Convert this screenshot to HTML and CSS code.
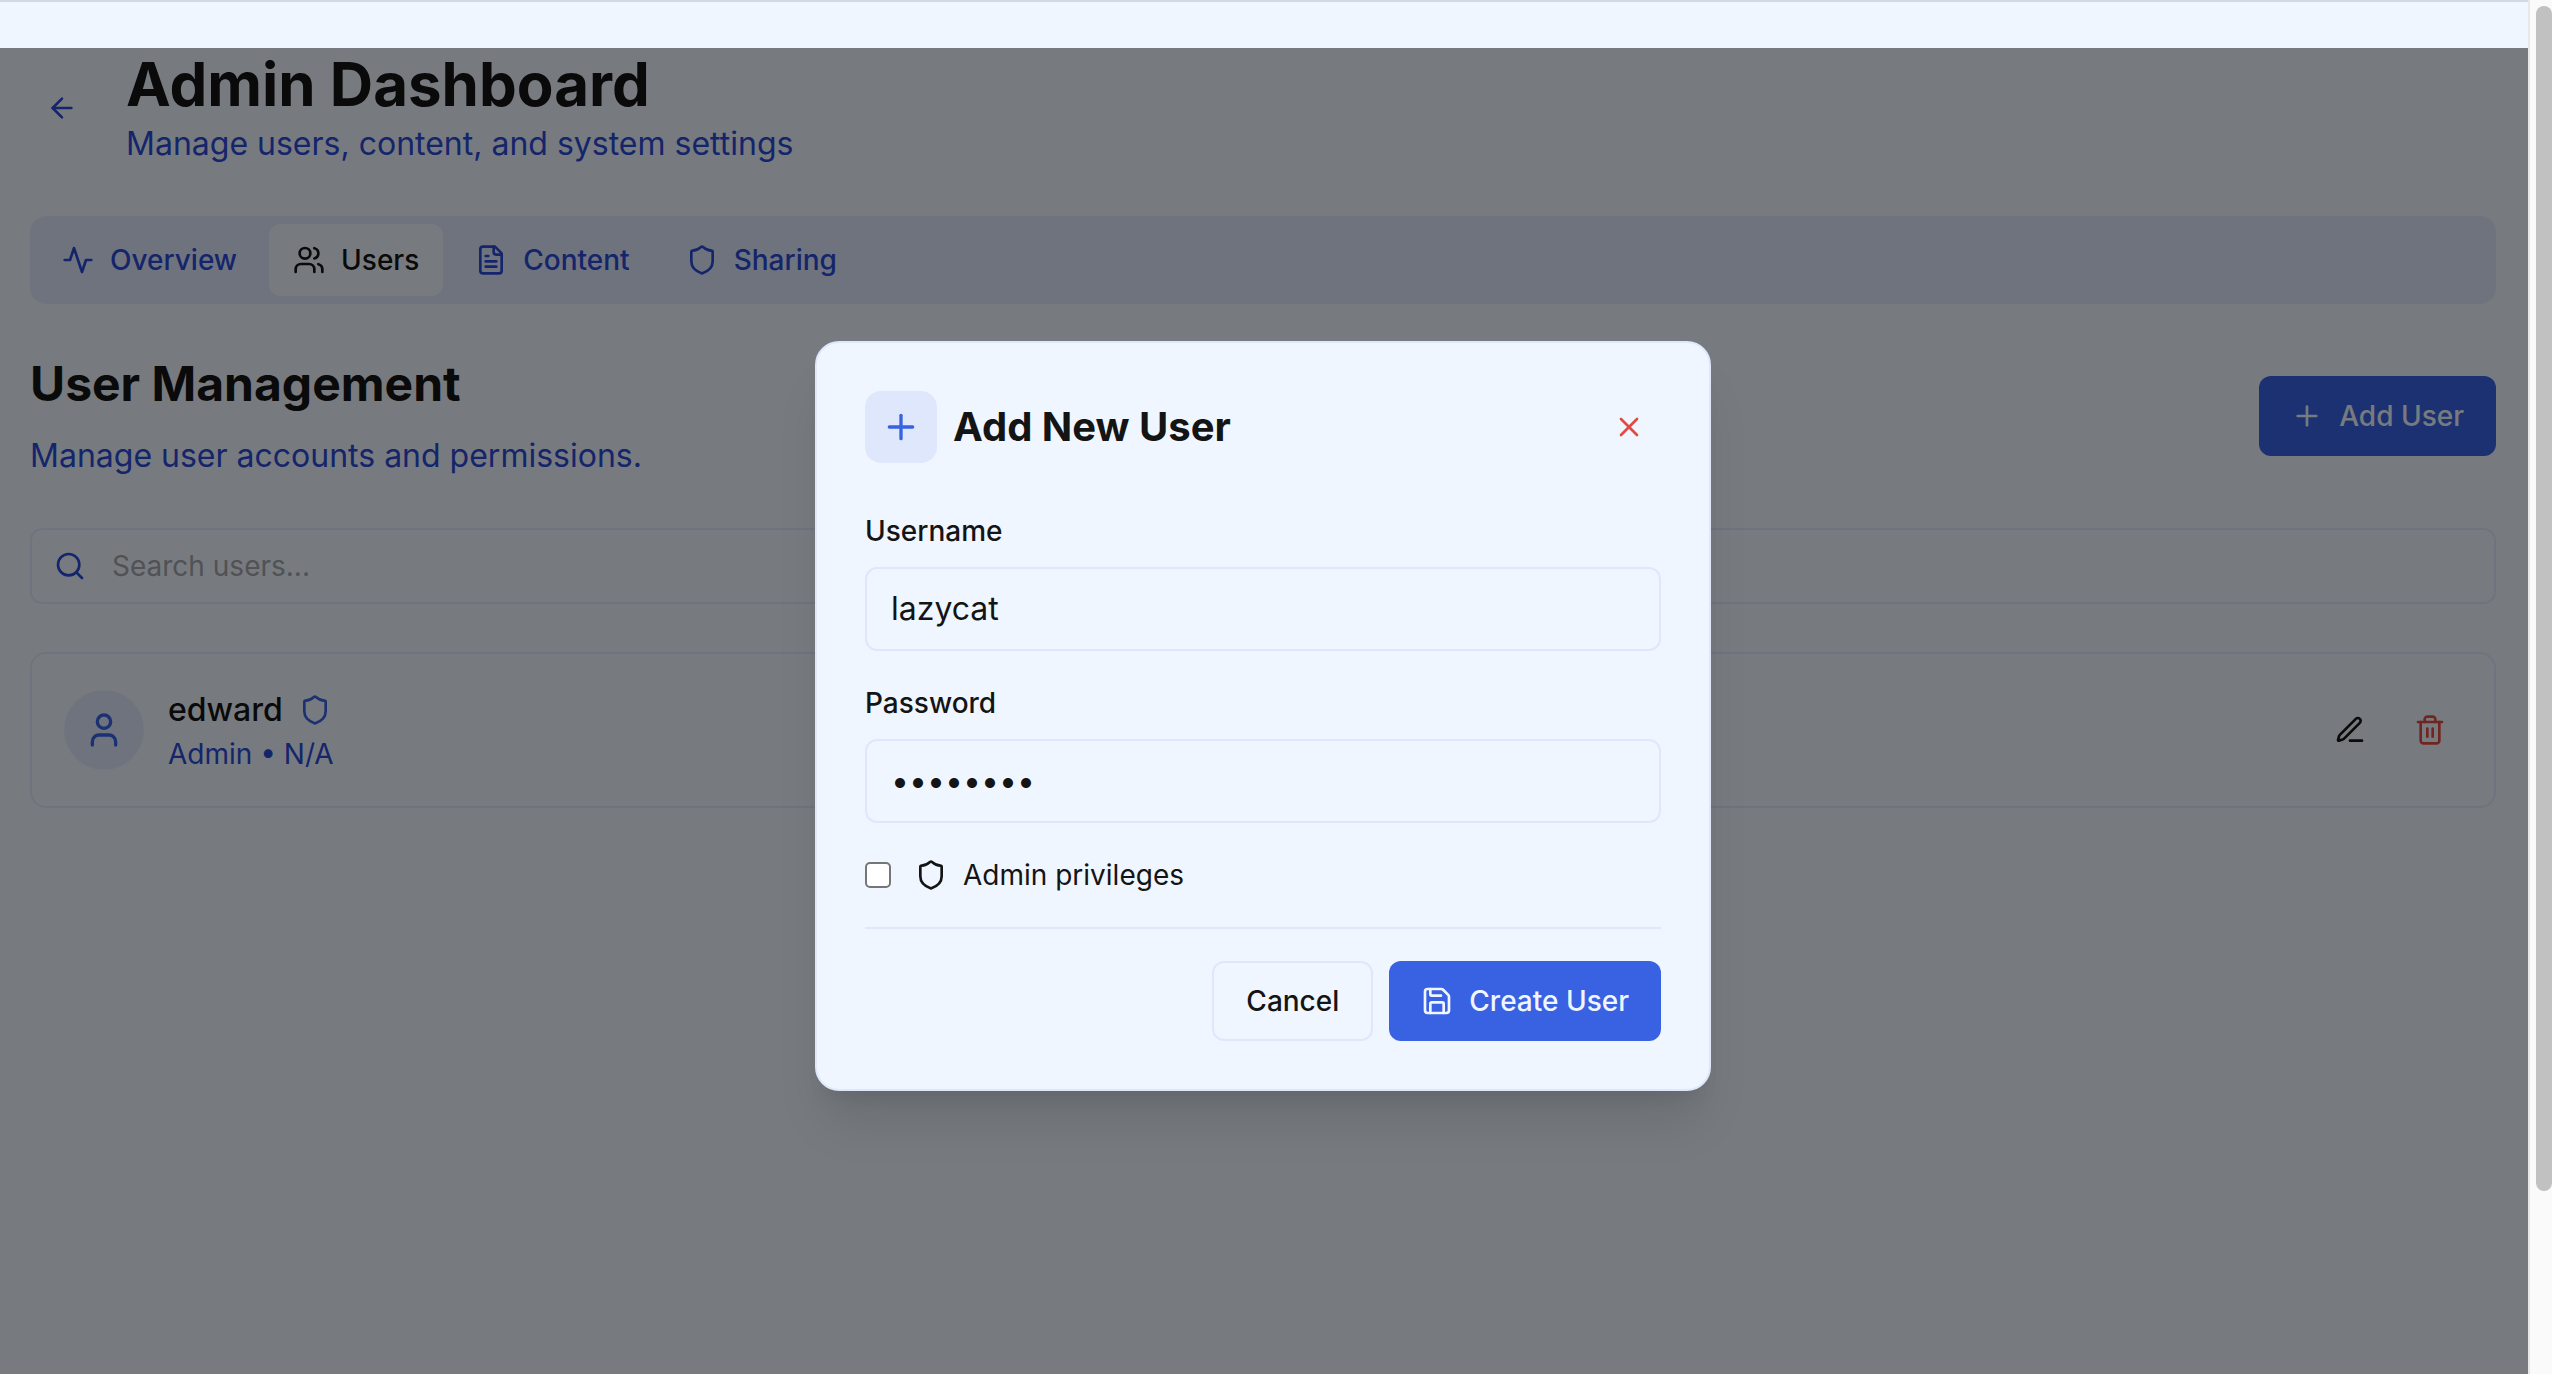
FILE: index.html
```html
<!DOCTYPE html>
<html lang="en">
<head>
<meta charset="utf-8">
<title>Admin Dashboard</title>
<link rel="stylesheet" href="styles.css">
</head>
<body>
<svg class="sprite" aria-hidden="true">
  <symbol id="arrow-left" viewBox="0 0 24 24"><path d="m12 19-7-7 7-7"/><path d="M19 12H5"/></symbol>
  <symbol id="activity" viewBox="0 0 24 24"><path d="M22 12h-4l-3 9L9 3l-3 9H2"/></symbol>
  <symbol id="users" viewBox="0 0 24 24"><path d="M16 21v-2a4 4 0 0 0-4-4H6a4 4 0 0 0-4 4v2"/><circle cx="9" cy="7" r="4"/><path d="M22 21v-2a4 4 0 0 0-3-3.87"/><path d="M16 3.130a4 4 0 0 1 0 7.750"/></symbol>
  <symbol id="file-text" viewBox="0 0 24 24"><path d="M15 2H6a2 2 0 0 0-2 2v16a2 2 0 0 0 2 2h12a2 2 0 0 0 2-2V7Z"/><path d="M14 2v4a2 2 0 0 0 2 2h4"/><path d="M10 9H8"/><path d="M16 13H8"/><path d="M16 17H8"/></symbol>
  <symbol id="shield" viewBox="0 0 24 24"><path d="M20 13c0 5-3.5 7.5-7.66 8.95a1 1 0 0 1-.67-.01C7.5 20.500 4 18 4 13V6a1 1 0 0 1 1-1c2 0 4.500-1.200 6.240-2.720a1.170 1.170 0 0 1 1.520 0C14.510 3.810 17 5 19 5a1 1 0 0 1 1 1z"/></symbol>
  <symbol id="plus" viewBox="0 0 24 24"><path d="M5 12h14"/><path d="M12 5v14"/></symbol>
  <symbol id="search" viewBox="0 0 24 24"><circle cx="11" cy="11" r="8"/><path d="m21 21-4.300-4.300"/></symbol>
  <symbol id="user" viewBox="0 0 24 24"><path d="M19 21v-2a4 4 0 0 0-4-4H9a4 4 0 0 0-4 4v2"/><circle cx="12" cy="7" r="4"/></symbol>
  <symbol id="pen-line" viewBox="0 0 24 24"><path d="M12 20h9"/><path d="M16.376 3.622a1 1 0 0 1 3.002 3.002L7.368 18.635a2 2 0 0 1-.855.506l-2.872.838a.5.5 0 0 1-.62-.62l.838-2.872a2 2 0 0 1 .506-.854z"/></symbol>
  <symbol id="trash" viewBox="0 0 24 24"><path d="M3 6h18"/><path d="M19 6v14c0 1-1 2-2 2H7c-1 0-2-1-2-2V6"/><path d="M8 6V4c0-1 1-2 2-2h4c1 0 2 1 2 2v2"/><path d="M10 11v6"/><path d="M14 11v6"/></symbol>
  <symbol id="close" viewBox="0 0 24 24"><path d="M18 6 6 18"/><path d="m6 6 12 12"/></symbol>
  <symbol id="save" viewBox="0 0 24 24"><path d="M15.200 3a2 2 0 0 1 1.400.6l3.800 3.800a2 2 0 0 1 .6 1.400V19a2 2 0 0 1-2 2H5a2 2 0 0 1-2-2V5a2 2 0 0 1 2-2z"/><path d="M17 21v-7a1 1 0 0 0-1-1H8a1 1 0 0 0-1 1v7"/><path d="M7 3v4a1 1 0 0 0 1 1h7"/></symbol>
</svg>

<div class="app">
  <div class="viewport">
    <div class="topbar"></div>
    <div class="stage">
      <main class="page">
        <header class="page-header">
          <button class="icon-button muted" type="button" aria-label="Back"><svg class="icon"><use href="#arrow-left"/></svg></button>
          <div>
            <h1 class="page-title">Admin Dashboard</h1>
            <p class="lead">Manage users, content, and system settings</p>
          </div>
        </header>

        <nav class="tabs">
          <button class="tab" type="button"><svg class="icon"><use href="#activity"/></svg>Overview</button>
          <button class="tab active" type="button"><svg class="icon"><use href="#users"/></svg>Users</button>
          <button class="tab" type="button"><svg class="icon"><use href="#file-text"/></svg>Content</button>
          <button class="tab" type="button"><svg class="icon"><use href="#shield"/></svg>Sharing</button>
        </nav>

        <section class="section">
          <div class="section-header">
            <div class="section-text">
              <h2 class="section-title">User Management</h2>
              <p class="lead">Manage user accounts and permissions.</p>
            </div>
            <button class="button primary" type="button"><svg class="icon"><use href="#plus"/></svg>Add User</button>
          </div>

          <label class="search">
            <svg class="icon"><use href="#search"/></svg>
            <input class="search-input" type="text" placeholder="Search users..." aria-label="Search users">
          </label>

          <article class="user-card">
            <div class="avatar"><svg class="icon large"><use href="#user"/></svg></div>
            <div class="user-info">
              <div class="user-name">edward<svg class="icon accent"><use href="#shield"/></svg></div>
              <div class="user-meta">Admin • N/A</div>
            </div>
            <div class="user-actions">
              <button class="icon-button" type="button" aria-label="Edit user"><svg class="icon"><use href="#pen-line"/></svg></button>
              <button class="icon-button danger" type="button" aria-label="Delete user"><svg class="icon"><use href="#trash"/></svg></button>
            </div>
          </article>
        </section>
      </main>

      <div class="overlay">
        <form class="modal" role="dialog" aria-labelledby="modal-title">
          <div class="modal-header">
            <span class="modal-icon"><svg class="icon large"><use href="#plus"/></svg></span>
            <h2 class="modal-title" id="modal-title">Add New User</h2>
            <button class="icon-button danger" type="button" aria-label="Close"><svg class="icon"><use href="#close"/></svg></button>
          </div>
          <div class="modal-body">
            <div class="field">
              <label class="field-label" for="username">Username</label>
              <input class="field-input" id="username" type="text" value="lazycat">
            </div>
            <div class="field">
              <label class="field-label" for="password">Password</label>
              <input class="field-input" id="password" type="password" value="password">
            </div>
            <div class="check-row">
              <input class="checkbox" id="admin" type="checkbox">
              <label class="check-label" for="admin"><svg class="icon"><use href="#shield"/></svg>Admin privileges</label>
            </div>
            <div class="modal-footer">
              <button class="button outline" type="button">Cancel</button>
              <button class="button primary" type="button"><svg class="icon"><use href="#save"/></svg>Create User</button>
            </div>
          </div>
        </form>
      </div>
    </div>
  </div>
  <div class="scrollbar"><div class="scrollbar-thumb"></div></div>
</div>
</body>
</html>
```

FILE: styles.css
```css
:root {
  --background: #eff6ff;
  --foreground: #141414;
  --border: #dfe7fd;
  --primary: #3962e3;
  --muted: #2b4ad6;
  --danger: #e34a42;
}

* { box-sizing: border-box; }

body {
  margin: 0;
  background: var(--background);
  color: var(--foreground);
  font-family: Inter, "Liberation Sans", sans-serif;
  font-size: 28px;
  line-height: 40px;
}

h1, h2, p { margin: 0; }

button, input { font: inherit; color: inherit; }

button {
  padding: 0;
  border: 0;
  background: none;
}

.sprite { display: none; }

.icon {
  flex: none;
  width: 32px;
  height: 32px;
  fill: none;
  stroke: currentColor;
  stroke-width: 2;
  stroke-linecap: round;
  stroke-linejoin: round;
}

.icon.large { width: 40px; height: 40px; }
.icon.accent { color: var(--primary); }

.app { display: flex; height: 100vh; }

.viewport {
  flex: 1;
  display: flex;
  flex-direction: column;
}

.topbar {
  height: 48px;
  border-top: 2px solid #d3d9e1;
}

.stage { flex: 1; position: relative; }

.page { padding: 0 32px 0 30px; }

.page-header {
  display: flex;
  align-items: center;
  gap: 32px;
}

.page-title {
  font-size: 60px;
  line-height: 72px;
  font-weight: 700;
}

.lead {
  font-size: 32px;
  line-height: 48px;
  color: var(--muted);
}

.icon-button {
  display: flex;
  align-items: center;
  justify-content: center;
  width: 64px;
  height: 64px;
}

.icon-button.muted { color: var(--muted); }
.icon-button.danger { color: var(--danger); }

.tabs {
  display: flex;
  gap: 8px;
  margin-top: 48px;
  padding: 8px;
  border-radius: 16px;
  background: var(--border);
}

.tab {
  display: flex;
  align-items: center;
  gap: 16px;
  height: 72px;
  padding: 0 24px;
  border-radius: 12px;
  color: var(--muted);
  font-weight: 500;
}

.tab.active {
  background: var(--background);
  color: var(--foreground);
}

.section {
  display: flex;
  flex-direction: column;
  gap: 48px;
  padding-top: 48px;
}

.section-header {
  display: flex;
  align-items: center;
  justify-content: space-between;
}

.section-text {
  display: flex;
  flex-direction: column;
  gap: 16px;
}

.section-title {
  font-size: 48px;
  line-height: 64px;
  font-weight: 700;
}

.button {
  display: flex;
  align-items: center;
  gap: 16px;
  height: 80px;
  padding: 0 32px;
  border-radius: 12px;
  font-weight: 500;
}

.button.primary {
  background: var(--primary);
  color: var(--background);
}

.button.outline { border: 2px solid var(--border); }

.search {
  display: flex;
  align-items: center;
  gap: 26px;
  height: 76px;
  padding: 0 22px;
  border: 2px solid var(--border);
  border-radius: 12px;
  color: var(--muted);
}

.search-input {
  flex: 1;
  padding: 0;
  border: 0;
  outline: 0;
  background: none;
  color: var(--foreground);
}

.search-input::placeholder { color: #a0a4aa; }

.user-card {
  display: flex;
  align-items: center;
  gap: 24px;
  padding: 32px;
  border: 2px solid var(--border);
  border-radius: 16px;
}

.avatar {
  display: flex;
  align-items: center;
  justify-content: center;
  width: 80px;
  height: 80px;
  border-radius: 50%;
  background: var(--border);
  color: var(--primary);
}

.user-info { flex: 1; }

.user-name {
  display: flex;
  align-items: center;
  gap: 16px;
  font-size: 32px;
  line-height: 48px;
  font-weight: 500;
}

.user-meta { color: var(--muted); }

.user-actions { display: flex; gap: 16px; }

.overlay {
  position: absolute;
  inset: 0;
  display: flex;
  align-items: center;
  justify-content: center;
  padding: 10px 2px 0 0;
  background: rgba(0, 0, 0, 0.5);
}

.modal {
  width: 896px;
  padding: 48px;
  border: 2px solid var(--border);
  border-radius: 24px;
  background: var(--background);
  box-shadow: 0 40px 50px -10px rgba(0, 0, 0, 0.1), 0 16px 20px -12px rgba(0, 0, 0, 0.1);
}

.modal-header {
  display: flex;
  align-items: center;
  gap: 16px;
  margin-bottom: 48px;
}

.modal-icon {
  display: flex;
  padding: 16px;
  border-radius: 16px;
  background: var(--border);
  color: var(--primary);
}

.modal-title {
  flex: 1;
  font-size: 40px;
  line-height: 56px;
  font-weight: 700;
}

.modal-body {
  display: flex;
  flex-direction: column;
  gap: 32px;
}

.field {
  display: flex;
  flex-direction: column;
  gap: 16px;
}

.field-label { font-weight: 500; }

.field-input {
  height: 84px;
  padding: 0 24px 2px;
  border: 2px solid var(--border);
  border-radius: 12px;
  outline: 0;
  background: var(--background);
  font-size: 32px;
}

.check-row {
  display: flex;
  align-items: center;
  gap: 24px;
}

.checkbox {
  width: 26px;
  height: 26px;
  margin: 0;
  appearance: none;
  border: 2px solid #767676;
  border-radius: 5px;
  background: #fff;
}

.check-label {
  display: flex;
  align-items: center;
  gap: 16px;
}

.modal-footer {
  display: flex;
  justify-content: flex-end;
  gap: 16px;
  padding-top: 32px;
  border-top: 2px solid var(--border);
}

.scrollbar {
  width: 24px;
  padding: 6px 0 0 6px;
  border-left: 2px solid #e8e8e8;
  background: #fafafa;
}

.scrollbar-thumb {
  height: 86.6%;
  border-radius: 8px;
  background: #c1c1c1;
}
```
